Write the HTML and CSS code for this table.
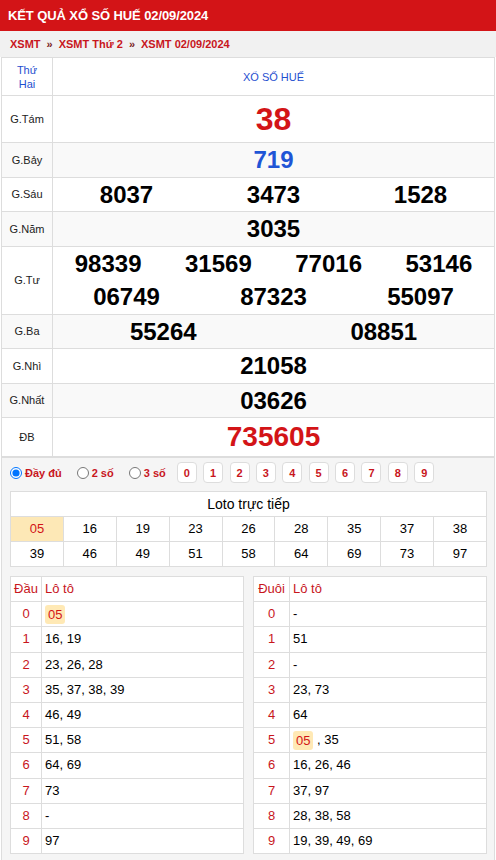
FILE: index.html
```html
<!DOCTYPE html>
<html lang="vi">
<head>
<meta charset="utf-8">
<title>KẾT QUẢ XỔ SỐ HUẾ 02/09/2024</title>
<link rel="stylesheet" href="styles.css">
</head>
<body>
<div class="title">KẾT QUẢ XỔ SỐ HUẾ 02/09/2024</div>
<div class="crumbs"><a>XSMT</a><span class="sep">»</span><a>XSMT Thứ 2</a><span class="sep">»</span><a>XSMT 02/09/2024</a></div>

<table class="kq">
  <colgroup><col class="c1"><col></colgroup>
  <tr class="head"><td class="lbl day">Thứ<br>Hai</td><td class="prov">XỔ SỐ HUẾ</td></tr>
  <tr class="g8"><td class="lbl">G.Tám</td><td><div class="nums"><span class="red">38</span></div></td></tr>
  <tr class="alt"><td class="lbl">G.Bảy</td><td><div class="nums"><span class="blue">719</span></div></td></tr>
  <tr><td class="lbl">G.Sáu</td><td><div class="nums"><span>8037</span><span>3473</span><span>1528</span></div></td></tr>
  <tr class="alt"><td class="lbl">G.Năm</td><td><div class="nums"><span>3035</span></div></td></tr>
  <tr><td class="lbl">G.Tư</td><td><div class="nums"><span>98339</span><span>31569</span><span>77016</span><span>53146</span></div><div class="nums"><span>06749</span><span>87323</span><span>55097</span></div></td></tr>
  <tr class="alt"><td class="lbl">G.Ba</td><td><div class="nums"><span>55264</span><span>08851</span></div></td></tr>
  <tr><td class="lbl">G.Nhì</td><td><div class="nums"><span>21058</span></div></td></tr>
  <tr class="alt"><td class="lbl">G.Nhất</td><td><div class="nums"><span>03626</span></div></td></tr>
  <tr class="db"><td class="lbl">ĐB</td><td><div class="nums"><span class="red">735605</span></div></td></tr>
</table>

<div class="loto">
  <div class="opts">
    <label class="opt"><input type="radio" name="m" checked>Đầy đủ</label>
    <label class="opt"><input type="radio" name="m">2 số</label>
    <label class="opt"><input type="radio" name="m">3 số</label>
    <div class="digits"><span>0</span><span>1</span><span>2</span><span>3</span><span>4</span><span>5</span><span>6</span><span>7</span><span>8</span><span>9</span></div>
  </div>

  <table class="lt">
    <tr><td colspan="9" class="lt-h">Loto trực tiếp</td></tr>
    <tr><td class="on">05</td><td>16</td><td>19</td><td>23</td><td>26</td><td>28</td><td>35</td><td>37</td><td>38</td></tr>
    <tr><td>39</td><td>46</td><td>49</td><td>51</td><td>58</td><td>64</td><td>69</td><td>73</td><td>97</td></tr>
  </table>

  <div class="dt-wrap">
    <table class="dt">
      <colgroup><col class="k1"><col></colgroup>
      <tr class="dh"><td>Đầu</td><td>Lô tô</td></tr>
      <tr><td>0</td><td><span class="hl">05</span></td></tr>
      <tr><td>1</td><td>16, 19</td></tr>
      <tr><td>2</td><td>23, 26, 28</td></tr>
      <tr><td>3</td><td>35, 37, 38, 39</td></tr>
      <tr><td>4</td><td>46, 49</td></tr>
      <tr><td>5</td><td>51, 58</td></tr>
      <tr><td>6</td><td>64, 69</td></tr>
      <tr><td>7</td><td>73</td></tr>
      <tr><td>8</td><td>-</td></tr>
      <tr><td>9</td><td>97</td></tr>
    </table>
    <table class="dt">
      <colgroup><col class="k2"><col></colgroup>
      <tr class="dh"><td>Đuôi</td><td>Lô tô</td></tr>
      <tr><td>0</td><td>-</td></tr>
      <tr><td>1</td><td>51</td></tr>
      <tr><td>2</td><td>-</td></tr>
      <tr><td>3</td><td>23, 73</td></tr>
      <tr><td>4</td><td>64</td></tr>
      <tr><td>5</td><td><span class="hl">05</span> , 35</td></tr>
      <tr><td>6</td><td>16, 26, 46</td></tr>
      <tr><td>7</td><td>37, 97</td></tr>
      <tr><td>8</td><td>28, 38, 58</td></tr>
      <tr><td>9</td><td>19, 39, 49, 69</td></tr>
    </table>
  </div>
</div>
</body>
</html>
```

FILE: styles.css
```css
* { box-sizing: border-box; }

body {
  margin: 0;
  width: 496px;
  font-family: "Liberation Sans", Arial, sans-serif;
  background: #fff;
  color: #000;
}

.title {
  background: #d31417;
  color: #fff;
  font-weight: bold;
  font-size: 13px;
  letter-spacing: -0.1px;
  height: 31px;
  line-height: 31px;
  padding-left: 8px;
}

.crumbs {
  background: #f1f1f1;
  height: 26px;
  line-height: 26px;
  padding-left: 10px;
  font-size: 11px;
  font-weight: bold;
  color: #c8161d;
}

.crumbs .sep {
  color: #7a1c1c;
  margin: 0 6px;
}

/* results table */
.kq {
  border-collapse: collapse;
  table-layout: fixed;
  width: 494px;
  margin-left: 1px;
}

.kq col.c1 { width: 51px; }

.kq td {
  border: 1px solid #ddd;
  padding: 0;
  text-align: center;
  vertical-align: middle;
}

.kq tr.alt td { background: #f9f9f9; }

.kq .lbl {
  font-size: 11px;
  color: #222;
}

.kq .day {
  color: #1f4fd0;
  line-height: 14px;
  height: 38px;
  padding: 2px 0;
}

.kq .prov {
  color: #1f4fd0;
  font-size: 11px;
}

.nums {
  display: flex;
  font-size: 24px;
  font-weight: bold;
  line-height: 33.5px;
}

.nums span {
  flex: 1;
  text-align: center;
}

.nums .red { color: #d31417; }
.nums .blue { color: #1f55d6; }

.g8 .nums {
  font-size: 32px;
  line-height: 46px;
}

.db .nums {
  font-size: 28px;
  line-height: 38px;
}

/* loto box */
.loto {
  width: 494px;
  margin-left: 1px;
  border: 1px solid #ddd;
  background: #f5f5f5;
  padding: 4px 7px 8px 8px;
}

.opts {
  display: flex;
  align-items: center;
  height: 21px;
}

.opt {
  display: flex;
  align-items: center;
  font-size: 11px;
  font-weight: bold;
  color: #c8161d;
  margin-right: 15px;
}

.opt input {
  width: 12px;
  height: 12px;
  margin: 0 3px 0 0;
}

.digits {
  display: flex;
  gap: 6.4px;
  margin-left: -4px;
}

.digits span {
  width: 20px;
  height: 21px;
  border: 1px solid #ddd;
  border-radius: 4px;
  background: #fff;
  font-size: 11px;
  font-weight: bold;
  color: #c8161d;
  display: flex;
  align-items: center;
  justify-content: center;
}

.lt {
  margin-top: 8px;
  width: 100%;
  border-collapse: collapse;
  table-layout: fixed;
  background: #fff;
}

.lt td {
  border: 1px solid #ddd;
  padding: 0;
  line-height: 24px;
  font-size: 13px;
  text-align: center;
}

.lt td.lt-h { font-size: 14px; }

.lt td.on {
  background: #fde8b6;
  color: #d31417;
}

.dt-wrap {
  display: flex;
  gap: 9px;
  margin-top: 9px;
  align-items: flex-start;
}

.dt {
  flex: 1;
  border-collapse: collapse;
  table-layout: fixed;
  background: #fff;
}

.dt col.k1 { width: 31px; }
.dt col.k2 { width: 36px; }

.dt td {
  border: 1px solid #ddd;
  padding: 0 3px;
  line-height: 24.2px;
  height: 25.2px;
  font-size: 13px;
  text-align: left;
}

.dt td:first-child {
  text-align: center;
  color: #c8161d;
  padding: 0;
}

.dt tr.dh td { color: #c8161d; }

.hl {
  display: inline-block;
  vertical-align: middle;
  background: #ffe9b5;
  color: #d31417;
  line-height: 15px;
  padding: 2px 3px;
  border-radius: 3px;
}
```
